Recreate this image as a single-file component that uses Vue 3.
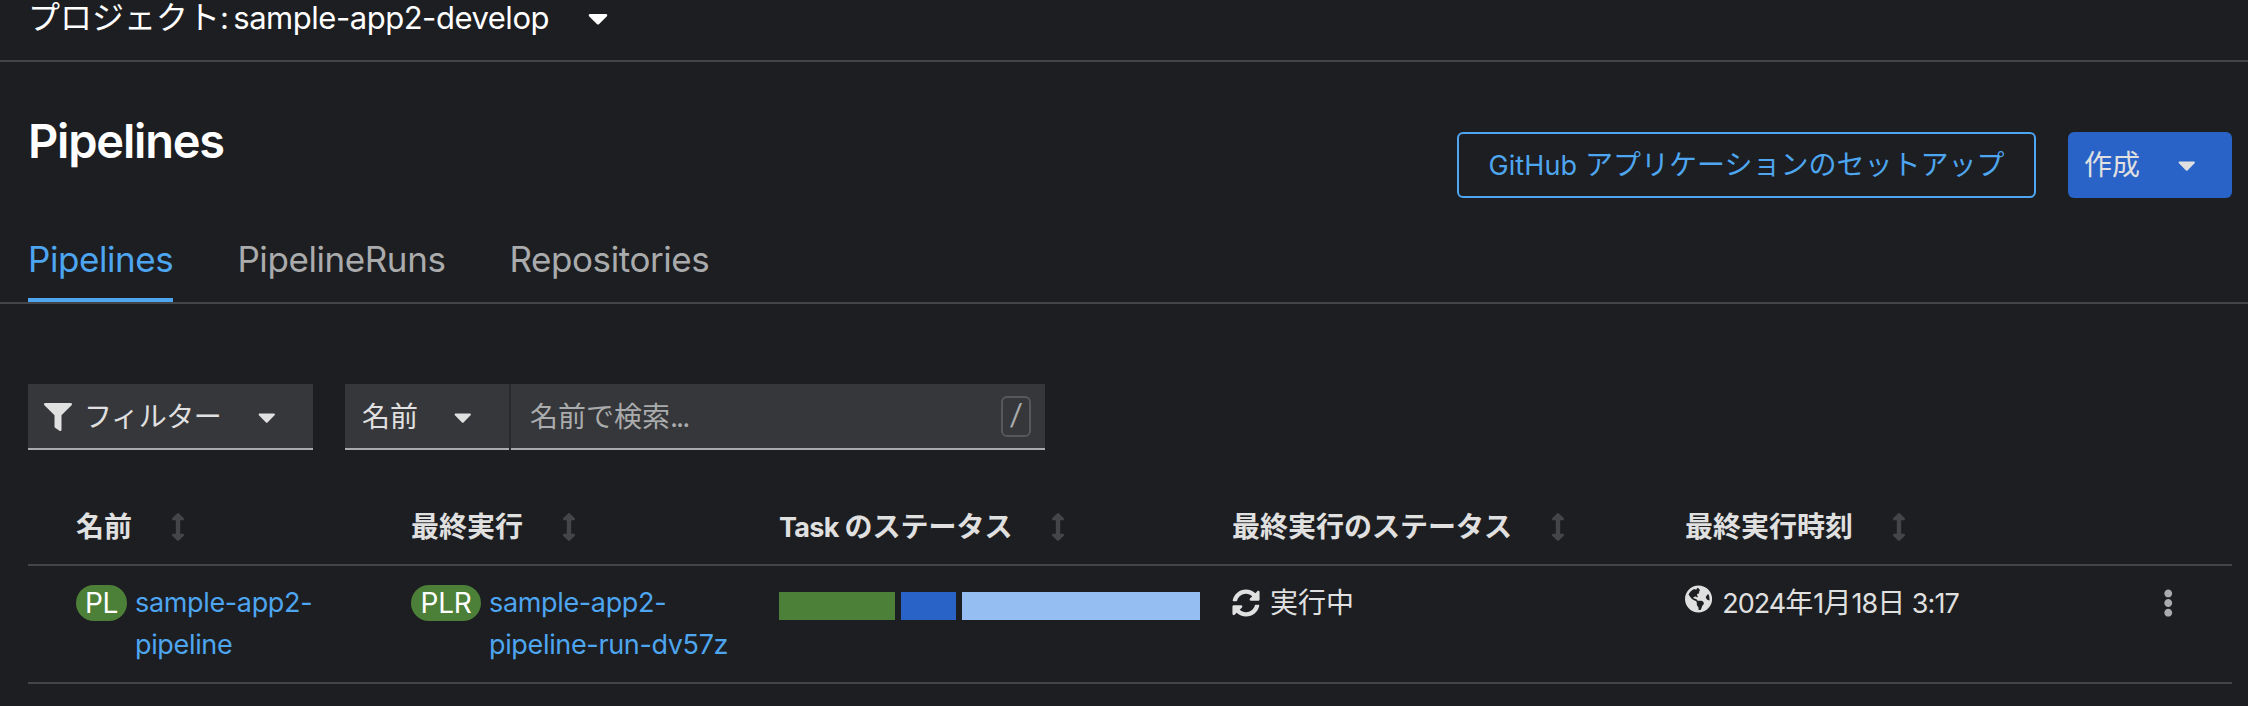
<script setup>
import { ref } from 'vue'

const project = 'sample-app2-develop'

const tabs = ['Pipelines', 'PipelineRuns', 'Repositories']
const activeTab = ref('Pipelines')

const columns = [
  { key: 'name', label: '名前' },
  { key: 'lastRun', label: '最終実行' },
  { key: 'tasks', latin: 'Task', label: 'のステータス' },
  { key: 'status', label: '最終実行のステータス' },
  { key: 'time', label: '最終実行時刻' },
]

// flex is the share of tasks in each state
const segments = [
  { state: 'succeeded', flex: 116 },
  { state: 'running', flex: 55 },
  { state: 'pending', flex: 238 },
]

const icons = {
  caret: {
    box: '0 0 320 512',
    d: 'M31.3 192h257.3c17.8 0 26.7 21.5 14.1 34.1L174.1 354.8c-7.8 7.8-20.5 7.8-28.3 0L17.2 226.1C4.6 213.5 13.5 192 31.3 192z',
  },
  filter: {
    box: '0 0 512 512',
    d: 'M487.976 0H24.028C2.71 0-8.047 25.866 7.058 40.971L192 225.941V432c0 7.831 3.821 15.17 10.237 19.662l80 55.98C298.02 518.69 320 507.493 320 487.98V225.941l184.947-184.97C520.021 25.896 509.338 0 487.976 0z',
  },
  sort: {
    box: '0 0 256 512',
    d: 'M214.059 377.941H168V134.059h46.059c21.382 0 32.09-25.851 16.971-40.971L144.971 7.029c-9.373-9.373-24.568-9.373-33.941 0L24.971 93.088c-15.119 15.119-4.411 40.971 16.971 40.971H88v243.882H41.941c-21.382 0-32.09 25.851-16.971 40.971l86.059 86.059c9.373 9.373 24.568 9.373 33.941 0l86.059-86.059c15.12-15.119 4.412-40.971-16.97-40.971z',
  },
  sync: {
    box: '0 0 512 512',
    d: 'M370.72 133.28C339.458 104.008 298.888 87.962 255.848 88c-77.458.068-144.328 53.178-162.791 126.85-1.344 5.363-6.122 9.15-11.651 9.15H24.103c-7.498 0-13.194-6.807-11.807-14.176C33.933 94.924 134.813 8 256 8c66.448 0 126.791 26.136 171.315 68.685L463.03 40.97C478.149 25.851 504 36.559 504 57.941V192c0 13.255-10.745 24-24 24H345.941c-21.382 0-32.09-25.851-16.971-40.971l41.75-41.749zM32 296h134.059c21.382 0 32.09 25.851 16.971 40.971l-41.75 41.75c31.262 29.273 71.835 45.319 114.876 45.28 77.418-.07 144.315-53.144 162.787-126.849 1.344-5.363 6.122-9.15 11.651-9.15h57.304c7.498 0 13.194 6.807 11.807 14.176C478.067 417.076 377.187 504 256 504c-66.448 0-126.791-26.136-171.315-68.685L48.97 471.03C33.851 486.149 8 475.441 8 454.059V320c0-13.255 10.745-24 24-24z',
  },
  globe: {
    box: '0 0 496 512',
    d: 'M248 8C111.03 8 0 119.03 0 256s111.03 248 248 248 248-111.03 248-248S384.97 8 248 8zm82.29 357.6c-3.9 3.88-7.99 7.95-11.31 11.28-2.99 3-5.1 6.7-6.17 10.71-1.51 5.66-2.73 11.38-4.77 16.87l-17.39 46.85c-13.76 3-28 4.69-42.65 4.69v-27.38c1.69-12.62-7.64-36.26-22.63-51.25-6-6-9.37-14.14-9.37-22.63v-32.01c0-11.64-6.27-22.34-16.46-27.97-14.37-7.95-34.81-19.06-48.81-26.11-11.48-5.78-22.1-13.14-31.65-21.75l-.8-.72a114.792 114.792 0 0 1-18.06-20.74c-9.38-13.77-24.66-36.42-34.59-51.14 20.47-45.5 57.36-82.04 103.2-101.89l24.01 12.01C203.48 89.74 216 82.01 216 70.11v-11.3c7.99-1.29 16.12-2.11 24.39-2.42l28.3 28.3c6.25 6.25 6.25 16.38 0 22.63L264 112l-10.34 10.34c-3.12 3.12-3.12 8.19 0 11.31l4.69 4.69c3.12 3.12 3.12 8.19 0 11.31l-8 8a8.008 8.008 0 0 1-5.66 2.34h-8.99c-2.08 0-4.08.81-5.58 2.27l-9.92 9.65a8.008 8.008 0 0 0-1.58 9.31l15.59 31.19c2.66 5.32-1.21 11.58-7.15 11.58h-5.64c-1.93 0-3.79-.7-5.24-1.96l-9.28-8.06a16.017 16.017 0 0 0-15.55-3.1l-31.17 10.39a11.95 11.95 0 0 0-8.17 11.34c0 4.53 2.56 8.66 6.61 10.69l11.08 5.54c9.41 4.71 19.79 7.16 30.31 7.16s22.59 27.29 32 32h66.75c8.49 0 16.62 3.37 22.63 9.37l13.69 13.69a30.503 30.503 0 0 1 8.93 21.57 46.536 46.536 0 0 1-13.72 32.98zM417 274.25c-5.79-1.45-10.84-5-14.15-9.97l-17.98-26.97a23.97 23.97 0 0 1 0-26.62l19.59-29.38c2.32-3.47 5.5-6.29 9.24-8.15l12.98-6.49C440.2 193.59 448 223.87 448 256c0 8.67-.74 17.16-1.82 25.54L417 274.25z',
  },
  kebab: {
    box: '0 0 192 512',
    d: 'M96 184c39.8 0 72 32.2 72 72s-32.2 72-72 72-72-32.2-72-72 32.2-72 72-72zM24 80c0 39.8 32.2 72 72 72s72-32.2 72-72S135.8 8 96 8 24 40.2 24 80zm0 352c0 39.8 32.2 72 72 72s72-32.2 72-72-32.2-72-72-72-72 32.2-72 72z',
  },
}
</script>

<template>
  <div class="page">
    <header class="project-bar">
      <span>プロジェクト<span class="latin"><span class="colon">: </span>{{ project }}</span></span>
      <svg class="icon" :viewBox="icons.caret.box"><path :d="icons.caret.d" /></svg>
    </header>

    <div class="heading">
      <h1>Pipelines</h1>
      <div class="actions">
        <button class="btn btn-outline"><span><span class="latin">GitHub</span> アプリケーションのセットアップ</span></button>
        <button class="btn btn-primary">
          作成
          <svg class="icon push" :viewBox="icons.caret.box"><path :d="icons.caret.d" /></svg>
        </button>
      </div>
    </div>

    <nav class="tabs">
      <a
        v-for="tab in tabs"
        :key="tab"
        class="tab"
        :class="{ active: tab === activeTab }"
        @click="activeTab = tab"
      >{{ tab }}</a>
    </nav>

    <div class="toolbar">
      <div class="control filter">
        <svg class="icon" :viewBox="icons.filter.box"><path :d="icons.filter.d" /></svg>
        フィルター
        <svg class="icon push" :viewBox="icons.caret.box"><path :d="icons.caret.d" /></svg>
      </div>
      <div class="search-group">
        <div class="control select">
          名前
          <svg class="icon push" :viewBox="icons.caret.box"><path :d="icons.caret.d" /></svg>
        </div>
        <div class="control search">
          <span>名前で検索<span class="dots">...</span></span>
          <kbd>/</kbd>
        </div>
      </div>
    </div>

    <table>
      <colgroup>
        <col class="w-name" />
        <col class="w-run" />
        <col class="w-tasks" />
        <col class="w-status" />
        <col class="w-time" />
        <col />
      </colgroup>
      <thead>
        <tr>
          <th v-for="col in columns" :key="col.key">
            <div class="th-inner">
              <span><span v-if="col.latin" class="latin">{{ col.latin }}&nbsp;</span>{{ col.label }}</span>
              <svg class="icon sort" :viewBox="icons.sort.box"><path :d="icons.sort.d" /></svg>
            </div>
          </th>
          <th></th>
        </tr>
      </thead>
      <tbody>
        <tr>
          <td>
            <div class="resource">
              <span class="badge">PL</span>
              <a class="latin">sample-app2-<br />pipeline</a>
            </div>
          </td>
          <td>
            <div class="resource">
              <span class="badge wide">PLR</span>
              <a class="latin">sample-app2-<br />pipeline-run-dv57z</a>
            </div>
          </td>
          <td>
            <div class="progress">
              <span
                v-for="s in segments"
                :key="s.state"
                :class="s.state"
                :style="{ flexGrow: s.flex }"
              ></span>
            </div>
          </td>
          <td>
            <div class="status">
              <svg class="icon" :viewBox="icons.sync.box"><path :d="icons.sync.d" /></svg>
              実行中
            </div>
          </td>
          <td>
            <div class="status">
              <svg class="icon globe" :viewBox="icons.globe.box"><path :d="icons.globe.d" /></svg>
              <span class="date"><span>2024</span>年<span>1</span>月<span>18</span>日<span> 3:17</span></span>
            </div>
          </td>
          <td class="kebab-cell">
            <div class="status">
              <svg class="icon kebab" :viewBox="icons.kebab.box"><path :d="icons.kebab.d" /></svg>
            </div>
          </td>
        </tr>
      </tbody>
    </table>
  </div>
</template>

<style>
body {
  background: #1c1e21;
}
</style>

<style scoped>
.page {
  height: 706px;
  overflow: hidden;
  background: #1c1e21;
  color: #e0e0e0;
  font-family: Inter, "Noto Sans CJK JP", sans-serif;
  font-size: 28px;
  line-height: 42px;
}
.icon {
  display: block;
  flex: none;
  height: 28px;
  fill: currentColor;
}
.push {
  margin-left: auto;
}
/* Latin glyphs run larger than the kana at the same size */
.latin {
  font-size: 27px;
  line-height: 1;
  letter-spacing: -0.35px;
}

.project-bar {
  display: flex;
  box-sizing: border-box;
  height: 62px;
  padding-left: 28px;
  border-bottom: 2px solid #444548;
  color: #fff;
  font-size: 32px;
  line-height: 36px;
}
.project-bar .latin {
  font-size: 31px;
  letter-spacing: -0.47px;
}
.project-bar .colon {
  letter-spacing: -2.2px;
}
.project-bar .icon {
  height: 32px;
  margin: 2px 0 0 39px;
}

.heading {
  display: flex;
  justify-content: space-between;
  height: 122px;
  padding: 48px 16px 0 28px;
}
h1 {
  margin: 0;
  color: #fff;
  font-size: 47px;
  font-weight: 600;
  line-height: 62px;
  letter-spacing: -1.2px;
}
.actions {
  display: flex;
  gap: 32px;
  margin-top: 22px;
}
.btn {
  display: flex;
  align-items: center;
  box-sizing: border-box;
  height: 66px;
  border: 0;
  border-radius: 6px;
  font: inherit;
  white-space: nowrap;
}
.btn-outline {
  justify-content: center;
  width: 579px;
  border: 2px solid #4ea5f0;
  background: none;
  color: #4ea5f0;
}
.btn-outline .latin {
  letter-spacing: 0.1px;
}
.btn-primary {
  width: 164px;
  padding: 0 37px 0 16px;
  background: #2963c7;
  color: #e0e0e0;
}

.tabs {
  display: flex;
  gap: 64px;
  padding-left: 28px;
  border-bottom: 2px solid #444548;
}
.tab {
  padding-bottom: 12px;
  border-bottom: 4px solid transparent;
  color: #aaabac;
  font-size: 35px;
  line-height: 54px;
  letter-spacing: -0.42px;
}
.tab.active {
  border-color: #4ea5f0;
  color: #4ea5f0;
}

.toolbar {
  display: flex;
  gap: 32px;
  margin: 80px 0 40px 28px;
}
.search-group {
  display: flex;
  gap: 2px;
  background: #292a2e;
}
.control {
  display: flex;
  align-items: center;
  box-sizing: border-box;
  height: 66px;
  padding: 2px 38px 0 17px;
  border-bottom: 2px solid #aaabac;
  background: #36373a;
}
.filter {
  width: 285px;
  padding-left: 16px;
  letter-spacing: -0.4px;
}
.filter .icon:first-child {
  margin-right: 12px;
}
.select {
  width: 164px;
}
.search {
  justify-content: space-between;
  width: 534px;
  padding: 0 14px 0 19px;
  color: #aaabac;
}
.search > span {
  margin-top: 2px;
}
.dots {
  letter-spacing: -2px;
}
kbd {
  box-sizing: border-box;
  width: 30px;
  height: 41px;
  border: 2px solid #57585b;
  border-radius: 6px;
  font: 31px/33px Lato, sans-serif;
  text-align: center;
}

table {
  width: 2204px;
  margin-left: 28px;
  border-collapse: separate;
  border-spacing: 0;
  table-layout: fixed;
}
.w-name {
  width: 367px;
}
.w-run {
  width: 368px;
}
.w-tasks,
.w-status {
  width: 453px;
}
.w-time {
  width: 454px;
}
th,
td {
  padding: 16px;
  border-bottom: 2px solid #444548;
  text-align: left;
  vertical-align: top;
  white-space: nowrap;
}
th:first-child,
td:first-child {
  padding-left: 48px;
}
.th-inner {
  display: flex;
  align-items: center;
  height: 42px;
  font-weight: 700;
}
.th-inner .latin {
  letter-spacing: -0.7px;
}
.sort {
  margin-left: 39px;
  color: #444548;
}
.resource {
  display: flex;
  gap: 8px;
}
.resource a {
  color: #4ea5f0;
  line-height: 42px;
}
.badge {
  width: 51px;
  height: 36px;
  margin-top: 3px;
  border-radius: 18px;
  background: #4c8039;
  color: #fff;
  font-size: 28px;
  line-height: 36px;
  letter-spacing: -0.3px;
  text-align: center;
}
.badge.wide {
  width: 70px;
}
.progress {
  display: flex;
  gap: 6px;
  height: 28px;
  margin-top: 10px;
}
.succeeded {
  background: #4c8039;
}
.running {
  background: #2963c7;
}
.pending {
  background: #95bff2;
}
.status {
  display: flex;
  align-items: center;
  gap: 10px;
  height: 42px;
}
.globe {
  margin-bottom: 8px;
}
.date span {
  font-size: 27px;
  line-height: 1;
  letter-spacing: -0.95px;
}
.kebab-cell {
  padding-left: 40px;
}
.kebab {
  color: #aaabac;
}
</style>
